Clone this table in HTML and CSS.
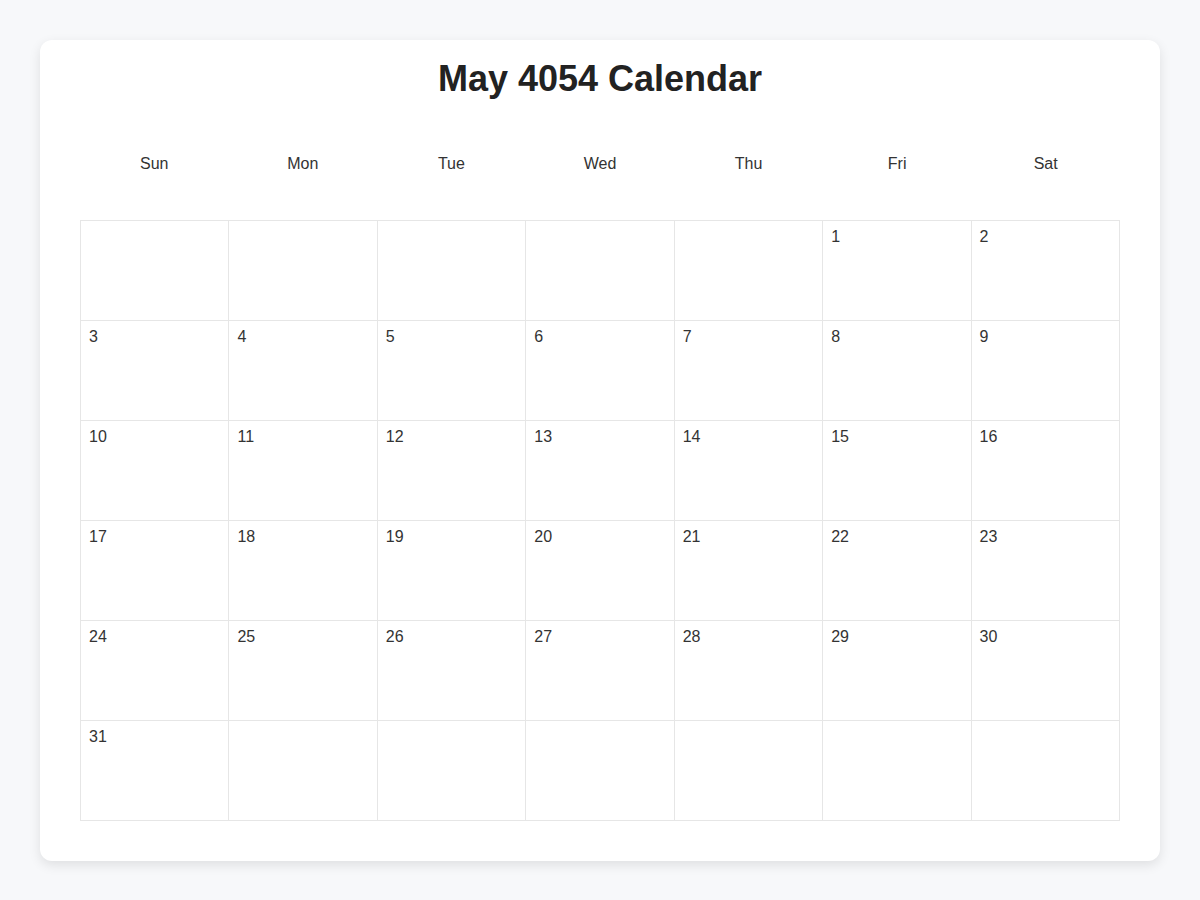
FILE: index.html
```html
<!DOCTYPE html>
<html lang="en">
<head>
<meta charset="utf-8">
<title>May 4054 Calendar</title>
<link rel="stylesheet" href="styles.css">
</head>
<body>
<div class="card">
  <h1 class="title">May 4054 Calendar</h1>
  <div class="weekdays">
    <div class="weekday">Sun</div>
    <div class="weekday">Mon</div>
    <div class="weekday">Tue</div>
    <div class="weekday">Wed</div>
    <div class="weekday">Thu</div>
    <div class="weekday">Fri</div>
    <div class="weekday">Sat</div>
  </div>
  <div class="grid">
    <div class="cell"></div><div class="cell"></div><div class="cell"></div><div class="cell"></div><div class="cell"></div><div class="cell">1</div><div class="cell">2</div>
    <div class="cell">3</div><div class="cell">4</div><div class="cell">5</div><div class="cell">6</div><div class="cell">7</div><div class="cell">8</div><div class="cell">9</div>
    <div class="cell">10</div><div class="cell">11</div><div class="cell">12</div><div class="cell">13</div><div class="cell">14</div><div class="cell">15</div><div class="cell">16</div>
    <div class="cell">17</div><div class="cell">18</div><div class="cell">19</div><div class="cell">20</div><div class="cell">21</div><div class="cell">22</div><div class="cell">23</div>
    <div class="cell">24</div><div class="cell">25</div><div class="cell">26</div><div class="cell">27</div><div class="cell">28</div><div class="cell">29</div><div class="cell">30</div>
    <div class="cell">31</div><div class="cell"></div><div class="cell"></div><div class="cell"></div><div class="cell"></div><div class="cell"></div><div class="cell"></div>
  </div>
</div>
</body>
</html>
```
FILE: styles.css
```css
html, body {
  margin: 0;
  padding: 0;
}
body {
  background: #f7f8fa;
  font-family: "Liberation Sans", Arial, sans-serif;
  color: #333;
  padding: 40px;
}
.card {
  background: #fff;
  border-radius: 12px;
  box-shadow: 0 4px 12px rgba(0, 0, 0, 0.1);
  padding: 18px 40px 40px;
}
.title {
  margin: 0 0 36px;
  font-size: 36px;
  font-weight: bold;
  line-height: 41px;
  text-align: center;
  color: #222;
}
.weekdays {
  display: grid;
  grid-template-columns: repeat(7, 1fr);
  margin-bottom: 27px;
}
.weekday {
  text-align: center;
  font-size: 16px;
  line-height: 18px;
  padding: 20px 0;
  color: #333;
}
.grid {
  display: grid;
  grid-template-columns: repeat(7, 1fr);
  grid-auto-rows: 100px;
  border-top: 1px solid #e6e6e6;
  border-left: 1px solid #e6e6e6;
}
.cell {
  border-right: 1px solid #e6e6e6;
  border-bottom: 1px solid #e6e6e6;
  padding: 7px 8px 8px;
  font-size: 16px;
  line-height: 18px;
  color: #333;
}
```
